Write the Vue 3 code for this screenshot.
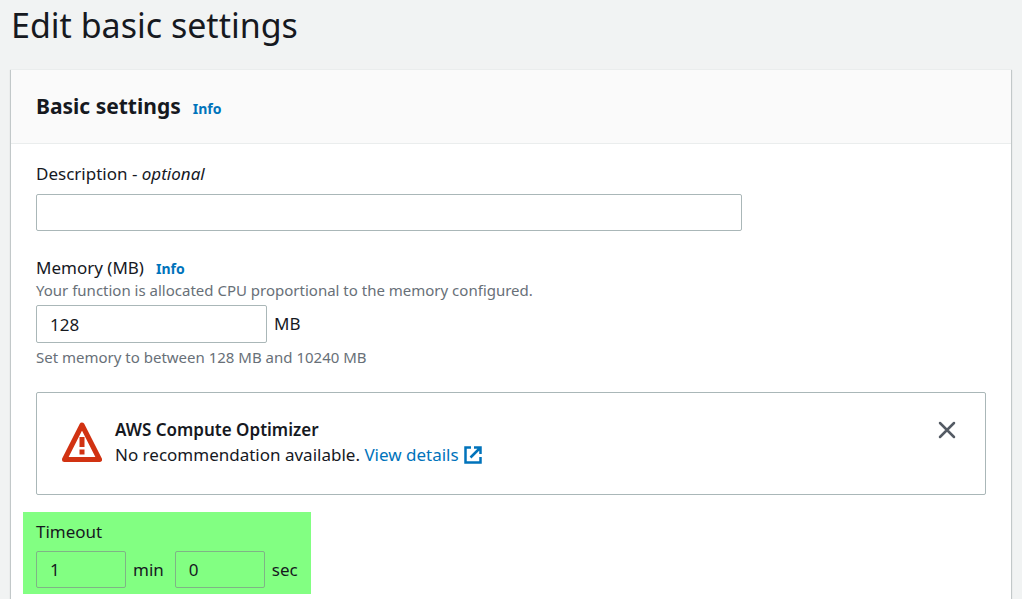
<script setup>
import { ref } from 'vue'

const description = ref('')
const memory = ref('128')
const minutes = ref('1')
const seconds = ref('0')
const showOptimizer = ref(true)
</script>

<template>
  <main class="page">
    <h1 class="page-title">Edit basic settings</h1>

    <section class="card">
      <header class="card-header">
        <h2 class="card-title">Basic settings</h2>
        <a class="info" href="#">Info</a>
      </header>

      <form class="card-body" @submit.prevent>
        <div class="field">
          <label class="label" for="description">Description - <em>optional</em></label>
          <input id="description" v-model="description" class="input wide" type="text" />
        </div>

        <div class="field memory">
          <div class="label-row">
            <label class="label" for="memory">Memory (MB)</label>
            <a class="info" href="#">Info</a>
          </div>
          <p class="hint">Your function is allocated CPU proportional to the memory configured.</p>
          <div class="input-row">
            <input id="memory" v-model="memory" class="input medium" type="text" inputmode="numeric" />
            <span class="unit">MB</span>
          </div>
          <p class="hint">Set memory to between 128 MB and 10240 MB</p>
        </div>

        <div v-if="showOptimizer" class="alert">
          <svg class="warning" viewBox="0 0 40 40" aria-hidden="true">
            <path d="M20 3 L37.500 37.500 H2.500 Z" fill="none" stroke="#d13212" stroke-width="5" stroke-linejoin="round" />
            <path d="M17.500 15h5v10h-5zM17.500 27.500h5v5h-5z" fill="#d13212" />
          </svg>
          <div class="alert-text">
            <strong>AWS Compute Optimizer</strong>
            <p>
              No recommendation available.
              <a class="details" href="#">View details<svg class="external" viewBox="0 0 18 18" aria-hidden="true">
                <path d="M7 1.500H1.500v15h15V11M10 1.500h6.500V8M16 2L6.500 11.500" fill="none" stroke="currentColor" stroke-width="2.500" />
              </svg></a>
            </p>
          </div>
          <button class="close" type="button" aria-label="Dismiss" @click="showOptimizer = false">
            <svg viewBox="0 0 18 18" aria-hidden="true">
              <path d="M2 2l14 14M16 2L2 16" fill="none" stroke="#545b64" stroke-width="2.500" stroke-linecap="round" />
            </svg>
          </button>
        </div>

        <fieldset class="timeout">
          <legend class="label">Timeout</legend>
          <div class="input-row">
            <input id="minutes" v-model="minutes" class="input small" type="text" inputmode="numeric" />
            <label class="unit" for="minutes">min</label>
            <input id="seconds" v-model="seconds" class="input small second" type="text" inputmode="numeric" />
            <label class="unit" for="seconds">sec</label>
          </div>
        </fieldset>
      </form>
    </section>
  </main>
</template>

<style>
body {
  margin: 0;
  background: #f1f3f3;
}
</style>

<style scoped>
.page {
  box-sizing: border-box;
  display: flex;
  flex-direction: column;
  min-height: 100vh;
  padding: 0 11px;
  background: #f1f3f3;
  color: #16191f;
  font-family: "Noto Sans", "Open Sans", sans-serif;
  font-size: 17px;
  line-height: 22px;
}

h1,
h2,
p {
  margin: 0;
}

a {
  color: #0073bb;
  text-decoration: none;
}

.page-title {
  padding: 3px 0 22px;
  font-size: 34px;
  font-weight: 400;
  line-height: 44px;
}

.card {
  flex: 1;
  border-top: 1px solid #eaeded;
  background: #fff;
  box-shadow:
    0 1px 1px 0 rgba(0, 28, 36, 0.3),
    1px 1px 1px 0 rgba(0, 28, 36, 0.15),
    -1px 1px 1px 0 rgba(0, 28, 36, 0.15);
}

.card-header {
  display: flex;
  align-items: baseline;
  gap: 12px;
  padding: 21px 25px 22px;
  border-bottom: 1px solid #eaeded;
  background: #fafafa;
}

.card-title {
  font-size: 21px;
  font-weight: 700;
  line-height: 30px;
}

.info {
  font-size: 14px;
  font-weight: 700;
}

.card-body {
  padding: 19px 25px 5px;
}

.field {
  display: flex;
  flex-direction: column;
  margin-bottom: 26px;
}

.field > .label {
  margin-bottom: 9px;
}

.label-row {
  display: flex;
  align-items: baseline;
  gap: 12px;
}

.hint {
  color: #687078;
  font-size: 15px;
  line-height: 21px;
}

.memory {
  margin-bottom: 24px;
}

.memory .input-row {
  margin: 4px 0;
}

.input-row {
  display: flex;
  align-items: center;
  gap: 7px;
}

.input {
  box-sizing: border-box;
  width: 100%;
  height: 37px;
  padding: 0 13px;
  border: 1px solid #aab7b8;
  border-radius: 2px;
  background: transparent;
  color: inherit;
  font: inherit;
}

.wide {
  max-width: 706px;
}

.medium {
  width: 231px;
  height: 38px;
}

.small {
  width: 90px;
  border-color: #7fb486;
}

.second {
  margin-left: 4px;
}

.alert {
  display: flex;
  align-items: flex-start;
  padding: 24px 25px 27px;
  border: 1px solid #aab7b8;
  border-radius: 2px;
}

.warning {
  flex: none;
  width: 40px;
  height: 40px;
  margin: 5px 13px 0 0;
}

.alert-text {
  flex: 1;
  line-height: 25px;
}

.alert-text strong {
  display: block;
  font-weight: 600;
}

.external {
  width: 18px;
  height: 18px;
  margin-left: 5px;
  vertical-align: -3px;
}

.close {
  display: flex;
  margin: 4px 4px 0 0;
  padding: 0;
  border: 0;
  background: none;
  cursor: pointer;
}

.close svg {
  width: 18px;
  height: 18px;
}

.timeout {
  width: 262px;
  min-width: 0;
  margin: 17px 0 0 -13px;
  padding: 9px 13px 6px;
  border: 0;
  background: #82ff82;
}

.timeout .label {
  float: left;
  width: 100%;
  margin-bottom: 8px;
  padding: 0;
}

.timeout .input-row {
  clear: both;
}
</style>
